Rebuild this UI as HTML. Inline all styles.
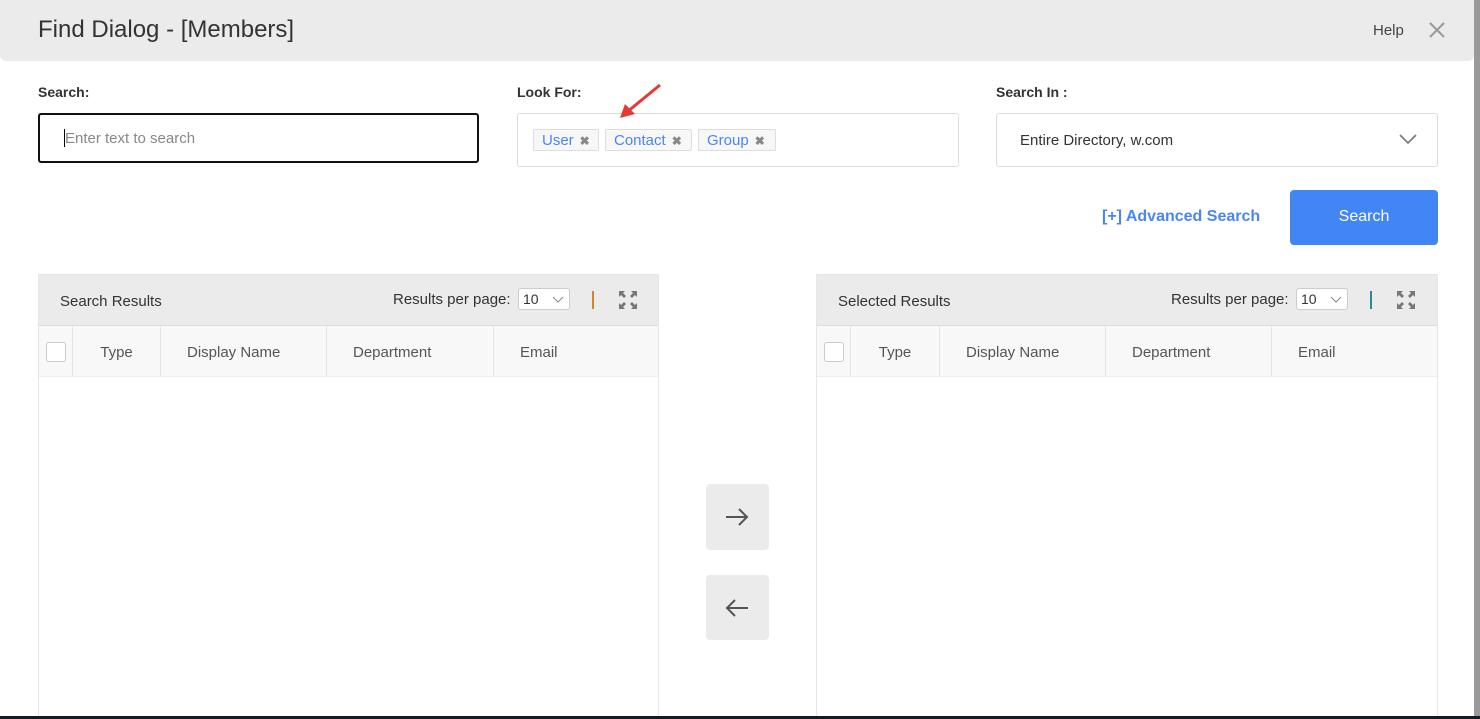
<!DOCTYPE html>
<html><head><meta charset="utf-8"><style>
*{box-sizing:border-box;margin:0;padding:0}
body{width:1480px;height:719px;overflow:hidden;background:#fff;font-family:"Liberation Sans",sans-serif;color:#333;position:relative}
.a{position:absolute}
.hdr{left:0;top:0;width:1474px;height:61px;background:#ebebeb;border-radius:0 0 6px 6px}
.lbl{font-size:14px;color:#333;font-weight:bold}
.tag{position:absolute;top:129px;height:22px;border:1px solid #ddd;background:#f7f7f7;border-radius:2px;color:#4a86f0;font-size:15px;line-height:21px;padding-left:8px}
.tag b{color:#888;font-size:12px;margin-left:6px}
.panel{border:1px solid #e6e6e6;border-bottom:none;background:#fff}
.ph{background:#ebebeb;height:51px;border-bottom:1px solid #ddd}
.ch{background:#f8f8f8;height:51px;border-bottom:1px solid #eee}
.col{position:absolute;top:51px;height:51px;border-left:1px solid #e4e4e4;font-size:15px;color:#555;line-height:53px}
.sel{position:absolute;top:13px;width:52px;height:22px;border:1px solid #ccc;border-radius:3px;background:#fff;font-size:14px;line-height:20px;padding-left:4px;color:#333}
.btn{position:absolute;left:706px;width:63px;background:#ebebeb;border-radius:4px}
</style></head><body>
<div class="a hdr"></div>
<div class="a" style="left:38px;top:16px;font-size:24px;color:#333">Find Dialog - [Members]</div>
<div class="a" style="left:1373px;top:22px;font-size:15px;color:#444">Help</div>
<svg class="a" style="left:1428px;top:21px" width="18" height="18"><path d="M2 2L16 16M16 2L2 16" stroke="#999" stroke-width="2"/></svg>
<div class="a" style="left:1474px;top:0;width:6px;height:719px;background:#9a9a9a"></div>

<div class="a lbl" style="left:38px;top:84px">Search:</div>
<div class="a lbl" style="left:517px;top:84px">Look For:</div>
<div class="a lbl" style="left:996px;top:84px">Search In :</div>

<div class="a" style="left:38px;top:113px;width:441px;height:50px;border:2px solid #111;border-radius:3px"></div>
<div class="a" style="left:64px;top:129px;width:1px;height:18px;background:#000"></div>
<div class="a" style="left:65px;top:130px;font-size:15px;color:#888">Enter text to search</div>

<div class="a" style="left:517px;top:113px;width:442px;height:54px;border:1px solid #ddd;border-radius:3px"></div>
<div class="tag" style="left:533px;width:66px">User<b>✖</b></div>
<div class="tag" style="left:605px;width:87px">Contact<b>✖</b></div>
<div class="tag" style="left:698px;width:78px">Group<b>✖</b></div>
<svg class="a" style="left:615px;top:82px" width="50" height="40"><path d="M45 3L12 30" stroke="#e53935" stroke-width="3"/><path d="M5 36L10 22L20 32Z" fill="#e53935"/></svg>

<div class="a" style="left:996px;top:113px;width:442px;height:54px;border:1px solid #ddd;border-radius:3px"></div>
<div class="a" style="left:1020px;top:132px;font-size:15px;color:#333">Entire Directory, w.com</div>
<svg class="a" style="left:1399px;top:134px" width="18" height="11"><path d="M1 1L9 9L17 1" stroke="#777" stroke-width="1.6" fill="none"/></svg>

<div class="a" style="left:1102px;top:208px;font-size:16px;color:#4a86f0;font-weight:bold">[+] Advanced Search</div>
<div class="a" style="left:1290px;top:190px;width:148px;height:55px;background:#4285f4;border-radius:4px;color:#fff;font-size:16px;text-align:center;line-height:54px">Search</div>

<div class="a panel" style="left:38px;top:274px;width:621px;height:442px">
 <div class="ph"></div><div class="ch"></div>
 <div class="a" style="left:21px;top:18px;font-size:15px;color:#333">Search Results</div>
 <div class="a" style="left:354px;top:16px;font-size:15px;color:#333">Results per page:</div>
 <div class="sel" style="left:479px">10<svg style="position:absolute;left:33px;top:7px" width="12" height="7"><path d="M1 1L6 6L11 1" stroke="#888" fill="none"/></svg></div>
 <div class="a" style="left:553px;top:16px;width:2px;height:18px;background:#d9822b"></div>
 <svg class="a" style="left:579px;top:15px" width="20" height="20" fill="#777"><path d="M1 1h6l-2 2 3 3-2 2-3-3-2 2zM19 1v6l-2-2-3 3-2-2 3-3-2-2zM1 19v-6l2 2 3-3 2 2-3 3 2 2zM19 19h-6l2-2-3-3 2-2 3 3 2-2z"/></svg>
 <div class="a" style="left:7px;top:67px;width:20px;height:20px;border:1px solid #ccc;border-radius:3px;background:#fff"></div>
 <div class="col" style="left:33px;width:88px;text-align:center">Type</div>
 <div class="col" style="left:121px;padding-left:26px">Display Name</div>
 <div class="col" style="left:287px;padding-left:26px">Department</div>
 <div class="col" style="left:454px;padding-left:26px">Email</div>
</div>

<div class="a panel" style="left:816px;top:274px;width:622px;height:442px">
 <div class="ph"></div><div class="ch"></div>
 <div class="a" style="left:21px;top:18px;font-size:15px;color:#333">Selected Results</div>
 <div class="a" style="left:354px;top:16px;font-size:15px;color:#333">Results per page:</div>
 <div class="sel" style="left:479px">10<svg style="position:absolute;left:33px;top:7px" width="12" height="7"><path d="M1 1L6 6L11 1" stroke="#888" fill="none"/></svg></div>
 <div class="a" style="left:553px;top:16px;width:2px;height:18px;background:#2a8a9a"></div>
 <svg class="a" style="left:579px;top:15px" width="20" height="20" fill="#777"><path d="M1 1h6l-2 2 3 3-2 2-3-3-2 2zM19 1v6l-2-2-3 3-2-2 3-3-2-2zM1 19v-6l2 2 3-3 2 2-3 3 2 2zM19 19h-6l2-2-3-3 2-2 3 3 2-2z"/></svg>
 <div class="a" style="left:7px;top:67px;width:20px;height:20px;border:1px solid #ccc;border-radius:3px;background:#fff"></div>
 <div class="col" style="left:33px;width:89px;text-align:center">Type</div>
 <div class="col" style="left:122px;padding-left:26px">Display Name</div>
 <div class="col" style="left:288px;padding-left:26px">Department</div>
 <div class="col" style="left:454px;padding-left:26px">Email</div>
</div>

<div class="btn" style="top:484px;height:66px"><svg style="position:absolute;left:19px;top:24px" width="24" height="18"><path d="M1 9H22M14 1L22 9L14 17" stroke="#555" stroke-width="2" fill="none"/></svg></div>
<div class="btn" style="top:575px;height:65px"><svg style="position:absolute;left:19px;top:24px" width="24" height="18"><path d="M23 9H2M10 1L2 9L10 17" stroke="#555" stroke-width="2" fill="none"/></svg></div>
<div class="a" style="left:0;top:716px;width:1480px;height:3px;background:#151b22"></div>
</body></html>
